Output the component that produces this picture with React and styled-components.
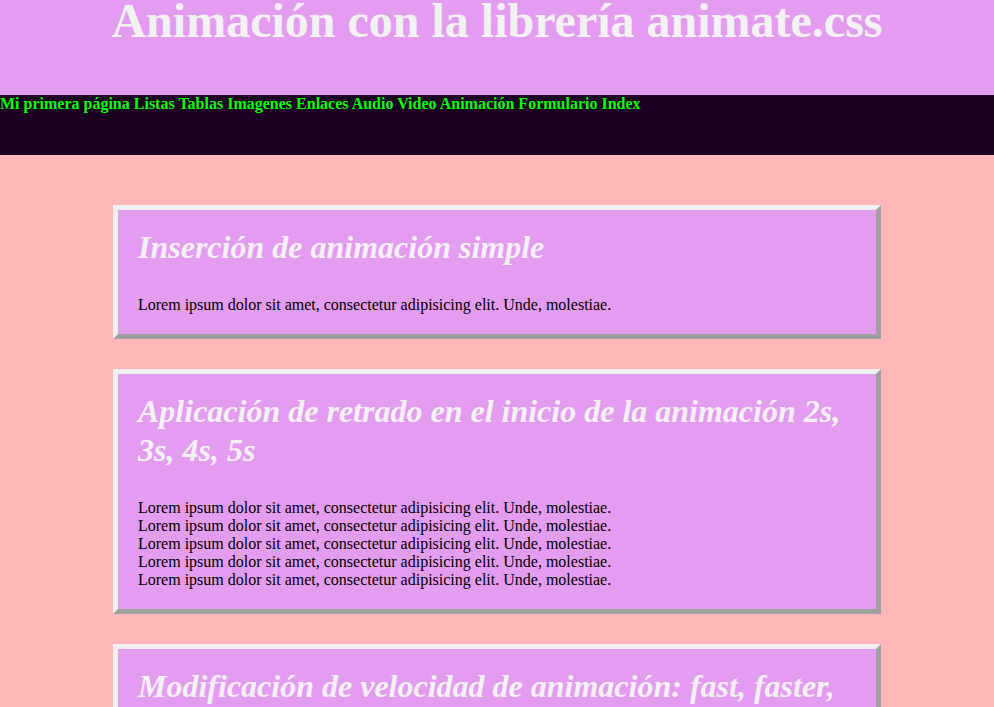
import React from 'react'
import styled, { createGlobalStyle } from 'styled-components'

const GlobalStyle = createGlobalStyle`
    body {
        margin: 0;
        background: #ffb6b9;
        font-family: "Liberation Serif", "Times New Roman", serif;
    }
`

const links = ['Mi primera página', 'Listas', 'Tablas', 'Imagenes', 'Enlaces', 'Audio', 'Video', 'Animación', 'Formulario', 'Index']

const lorem = 'Lorem ipsum dolor sit amet, consectetur adipisicing elit. Unde, molestiae.'

const sections = [
    { title: 'Inserción de animación simple', lines: 1 },
    { title: 'Aplicación de retrado en el inicio de la animación 2s, 3s, 4s, 5s', lines: 5 },
    { title: 'Modificación de velocidad de animación: fast, faster, slow, slower', lines: 5 },
]

export default function App() {
    return (
        <>
            <GlobalStyle />
            <Header>
                <h1>Animación con la librería animate.css</h1>
            </Header>
            <Nav>
                {links.map((l, i) => (
                    <React.Fragment key={l}>
                        <a href="#">{l}</a>{i < links.length - 1 ? ' ' : ''}
                    </React.Fragment>
                ))}
            </Nav>
            <Main>
                {sections.map(s => (
                    <Card key={s.title}>
                        <h2>{s.title}</h2>
                        <p>
                            {Array.from({ length: s.lines }).map((_, i) => (
                                <React.Fragment key={i}>
                                    {lorem}{i < s.lines - 1 && <br />}
                                </React.Fragment>
                            ))}
                        </p>
                    </Card>
                ))}
            </Main>
        </>
    )
}

const Header = styled.header`
    background: #e49cf0;
    height: 95px;
    h1 {
        margin: 0;
        text-align: center;
        font-size: 48px;
        line-height: 42px;
        color: #f2f2f2;
    }
`

const Nav = styled.nav`
    background: #1c0022;
    height: 60px;
    font-weight: bold;
    font-size: 16px;
    a {
        color: #00ff00;
        text-decoration: none;
    }
`

const Main = styled.main`
    padding: 50px 0 40px;
    display: flex;
    flex-direction: column;
    align-items: center;
    gap: 30px;
`

const Card = styled.section`
    box-sizing: border-box;
    width: 768px;
    background: #e49cf0;
    border: 5px solid;
    border-color: #f0f0f0 #a0a0a0 #a0a0a0 #f0f0f0;
    padding: 18px 20px 20px;
    h2 {
        margin: 0 0 29px;
        font-size: 32px;
        line-height: 39px;
        font-style: italic;
        color: #f2f2f2;
    }
    p {
        margin: 0;
        font-size: 16px;
        line-height: 18px;
        color: #000;
    }
`
